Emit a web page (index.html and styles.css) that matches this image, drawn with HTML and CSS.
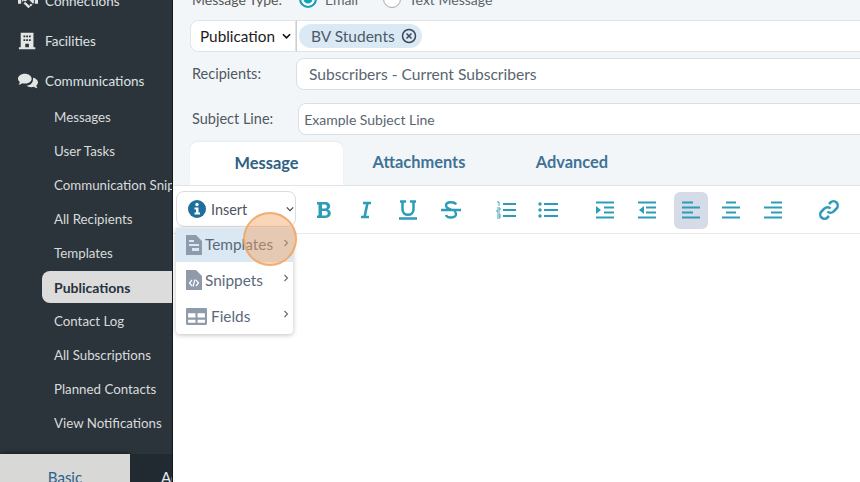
FILE: index.html
```html
<!DOCTYPE html>
<html lang="en">
<head>
<meta charset="utf-8">
<title>Publications</title>
<link rel="stylesheet" href="styles.css">
</head>
<body>
<div class="app">
  <aside class="sidebar">
    <nav class="nav">
      <div class="nav-main nav-first">
        <svg class="nav-icon" viewBox="0 0 22 16"><path fill="#e4e6e6" d="M0 1h3.500v10H0zM18.500 1H22v10h-3.500zM4.500 2H9l2 1 2-1h4.500v8l-1 1-5-5-3.500 2.500L6 7.500 4.500 9.500zM6 10.500l2-1.500 5.500 5-2 2zM14 11l2 1-2 2-1.500-1.500z"/></svg>
        <span>Connections</span>
      </div>
      <div class="nav-main">
        <svg class="nav-icon" viewBox="0 0 22 18"><path fill="#e4e6e6" fill-rule="evenodd" d="M3 0h14v16h2v2H1v-2h2zM6 3v2h2V3zm3 0v2h2V3zm3 0v2h2V3zM6 7v2h2V7zm3 0v2h2V7zm3 0v2h2V7zM8 12v4h4v-4z"/></svg>
        <span>Facilities</span>
      </div>
      <div class="nav-main nav-last">
        <svg class="nav-icon" viewBox="0 0 22 16"><path fill="#e4e6e6" d="M7.500 0C11.600 0 15 2.400 15 5.400s-3.400 5.400-7.500 5.400c-1 0-2-.1-2.800-.4C3.700 11.200 2.200 12 .5 12c.8-.8 1.400-1.900 1.500-3C.8 8 0 6.800 0 5.400 0 2.400 3.400 0 7.500 0z"/><path fill="#e4e6e6" d="M16.500 4.500c3 .6 5.500 2.500 5.500 5 0 1.300-.7 2.500-1.900 3.400.1 1 .7 2.200 1.400 3.100-1.700 0-3.100-.8-4.100-1.600-.9.300-1.900.4-2.900.4-2 0-3.900-.6-5.200-1.600 4.500-.2 7.700-3 7.200-8.700z"/></svg>
        <span>Communications</span>
      </div>
      <a class="nav-sub">Messages</a>
      <a class="nav-sub">User Tasks</a>
      <a class="nav-sub">Communication Snippets</a>
      <a class="nav-sub">All Recipients</a>
      <a class="nav-sub">Templates</a>
      <a class="nav-sub nav-active">Publications</a>
      <a class="nav-sub">Contact Log</a>
      <a class="nav-sub">All Subscriptions</a>
      <a class="nav-sub">Planned Contacts</a>
      <a class="nav-sub">View Notifications</a>
    </nav>
    <div class="side-tabs">
      <div class="side-tab side-tab-on">Basic</div>
      <div class="side-tab">Advanced</div>
    </div>
  </aside>

  <main class="main">
    <div class="form">
      <div class="type-row">
        <span class="type-label">Message Type:</span>
        <span class="radio radio-on"></span><span class="radio-text">Email</span>
        <span class="radio radio-off"></span><span class="radio-text">Text Message</span>
      </div>
      <div class="pub-row">
        <div class="pub-select">
          <span>Publication</span>
          <svg class="chev" viewBox="0 0 10 6"><path d="M1 1l4 4 4-4" fill="none" stroke="#111" stroke-width="1.800"/></svg>
        </div>
        <div class="pub-input">
          <span class="chip">BV Students
            <svg class="chip-x" viewBox="0 0 16 16"><circle cx="8" cy="8" r="6.500" fill="none" stroke="#37465a" stroke-width="1.500"/><path d="M5.500 5.500l5 5M10.500 5.500l-5 5" stroke="#37465a" stroke-width="1.500"/></svg>
          </span>
        </div>
      </div>
      <div class="field-row recipients-row">
        <label class="field-label">Recipients:</label>
        <div class="box box-recipients">Subscribers - Current Subscribers</div>
      </div>
      <div class="field-row subject-row">
        <label class="field-label">Subject Line:</label>
        <div class="box box-subject">Example Subject Line</div>
      </div>
      <div class="tabs">
        <div class="tab tab-on">Message</div>
        <div class="tab tab-attach">Attachments</div>
        <div class="tab tab-adv">Advanced</div>
      </div>
    </div>
    <div class="editor">
      <div class="toolbar">
        <div class="insert-spacer"></div>
        <svg class="tool t-b" viewBox="0 0 16 18"><path fill="#2c9cb8" fill-rule="evenodd" d="M1 1h8c6 0 6.500 6 3 7.500 4.500 1.500 3.500 8.500-2.500 8.500H1v-2.500h1.500v-11H1zM6 3.500V7.500h3c2.500 0 2.500-4 0-4zM6 10v4.500h3.500c3 0 3-4.500 0-4.500z"/></svg>
        <svg class="tool t-i" viewBox="0 0 16 18"><path d="M5 2h8M3 16h8M9.500 2L6.500 16" fill="none" stroke="#2c9cb8" stroke-width="2.600"/></svg>
        <svg class="tool t-u" viewBox="0 0 20 20"><path d="M2 1.500h6M12 1.500h6M4.500 1.500v8c0 7 11 7 11 0v-8M1 18.500h18" fill="none" stroke="#2c9cb8" stroke-width="2.500"/></svg>
        <svg class="tool t-s" viewBox="0 0 20 20"><path d="M15 4.500C14 1.500 5 1 5 5.500c0 2 2 3 5 4M5 15c1 3.500 10 3.500 10-1 0-1-.5-2-1.500-3M0 10h20" fill="none" stroke="#2c9cb8" stroke-width="2.400"/></svg>
        <svg class="tool t-ol" viewBox="0 0 20 18"><path d="M7 3h13M7 9h13M7 15h13" stroke="#2c9cb8" stroke-width="2.200"/><path d="M1 1h2v4M1 7h3v2H1v2h3M1 13h3v4H1M1 15h3" fill="none" stroke="#2c9cb8" stroke-width=".9"/></svg>
        <svg class="tool t-ul" viewBox="0 0 20 18"><path d="M6 3h14M6 9h14M6 15h14" stroke="#2c9cb8" stroke-width="2.200"/><circle cx="2" cy="3" r="1.700" fill="#2c9cb8"/><circle cx="2" cy="9" r="1.700" fill="#2c9cb8"/><circle cx="2" cy="15" r="1.700" fill="#2c9cb8"/></svg>
        <svg class="tool t-in" viewBox="0 0 18 18"><path d="M0 1.500h18M8 6.500h10M8 11.500h10M0 16.500h18" stroke="#2c9cb8" stroke-width="2"/><path d="M0 5l5 4-5 4z" fill="#2c9cb8"/></svg>
        <svg class="tool t-out" viewBox="0 0 18 18"><path d="M0 1.500h18M8 6.500h10M8 11.500h10M0 16.500h18" stroke="#2c9cb8" stroke-width="2"/><path d="M6 5L1 9l5 4z" fill="#2c9cb8"/></svg>
        <div class="tool-on">
          <svg class="tool-svg" viewBox="0 0 18 18"><path d="M0 1.500h11M0 6.500h18M0 11.500h11M0 16.500h18" stroke="#2c9cb8" stroke-width="2"/></svg>
        </div>
        <svg class="tool t-ac" viewBox="0 0 18 18"><path d="M4 1.500h10M0 6.500h18M4 11.500h10M0 16.500h18" stroke="#2c9cb8" stroke-width="2"/></svg>
        <svg class="tool t-ar" viewBox="0 0 18 18"><path d="M7 1.500h11M0 6.500h18M7 11.500h11M0 16.500h18" stroke="#2c9cb8" stroke-width="2"/></svg>
        <svg class="tool t-link" viewBox="0 0 20 20"><path d="M8.500 11.500a4 4 0 0 0 6 0l3-3a4 4 0 0 0-6-6l-1.500 1.500M11.500 8.500a4 4 0 0 0-6 0l-3 3a4 4 0 0 0 6 6L10 16" fill="none" stroke="#2c9cb8" stroke-width="2.500"/></svg>
      </div>
    </div>
  </main>

  <div class="insert">
    <svg class="info" viewBox="0 0 18 18"><circle cx="9" cy="9" r="9" fill="#1f6f9c"/><circle cx="9" cy="4.500" r="1.700" fill="#fff"/><path d="M6.500 7.500H10.500V12.500H12V14.500H6.500V12.500H8V9.500H6.500z" fill="#fff"/></svg>
    <span>Insert</span>
    <svg class="chev chev-insert" viewBox="0 0 10 6"><path d="M1 1l4 4 4-4" fill="none" stroke="#444" stroke-width="1.500"/></svg>
  </div>

  <div class="menu">
    <div class="menu-item menu-item-on">
      <svg class="menu-icon" viewBox="0 0 16 20"><path fill="#8f9bab" fill-rule="evenodd" d="M0 0h10l6 6v14H0zM3 5v2h5V5zM3 9v2h10V9zM6 13v3h7v-3z"/></svg>
      <span>Templates</span>
      <svg class="caret" viewBox="0 0 6 8"><path d="M1.500 1l3 3-3 3" fill="none" stroke="#5f6a75" stroke-width="1.100"/></svg>
    </div>
    <div class="menu-item">
      <svg class="menu-icon" viewBox="0 0 16 20"><path fill="#8f9bab" d="M0 0h10l6 6v14H0z"/><path d="M6 10l-2.500 3 2.500 3M10 10l2.500 3-2.500 3M9 9.500l-2 7" fill="none" stroke="#fff" stroke-width="1.200"/></svg>
      <span>Snippets</span>
      <svg class="caret" viewBox="0 0 6 8"><path d="M1.500 1l3 3-3 3" fill="none" stroke="#5f6a75" stroke-width="1.100"/></svg>
    </div>
    <div class="menu-item">
      <svg class="menu-icon menu-icon-wide" viewBox="0 0 20 16"><path fill="#8f9bab" fill-rule="evenodd" d="M1 0h18a1 1 0 0 1 1 1v14a1 1 0 0 1-1 1H1a1 1 0 0 1-1-1V1a1 1 0 0 1 1-1zM2 5v4h7V5zm9 0v4h7V5zM2 11v3h7v-3zm9 0v3h7v-3z"/></svg>
      <span>Fields</span>
      <svg class="caret" viewBox="0 0 6 8"><path d="M1.500 1l3 3-3 3" fill="none" stroke="#5f6a75" stroke-width="1.100"/></svg>
    </div>
  </div>

  <div class="spot"></div>
</div>
</body>
</html>
```

FILE: styles.css
```css
* { box-sizing: border-box; }
html, body { margin: 0; padding: 0; height: 482px; overflow: hidden; }
body { font-family: Lato, "Open Sans", sans-serif; background: #fff; }

.app { position: relative; display: flex; width: 860px; height: 482px; overflow: hidden; }

/* Sidebar */
.sidebar {
  position: relative;
  flex: 0 0 173px;
  height: 482px;
  background: #2c343b;
  border-right: 1px solid #14181c;
  overflow: hidden;
  display: flex;
  flex-direction: column;
  justify-content: space-between;
}
.nav { display: flex; flex-direction: column; margin-top: -19px; }
.nav-main {
  display: flex;
  align-items: center;
  height: 40px;
  padding-left: 18px;
  font-size: 13.5px;
  color: #dfe2e3;
  white-space: nowrap;
}
.nav-last { height: 39px; padding-top: 1px; }
.nav-icon { width: 20px; height: 18px; margin-right: 7px; flex: none; }
.nav-sub {
  display: flex;
  align-items: center;
  height: 34px;
  padding-left: 54px;
  font-size: 13.3px;
  color: #d8dbdc;
  white-space: nowrap;
}
.nav-active {
  position: relative;
  margin-left: 42px;
  height: 32px;
  margin-top: 1px;
  margin-bottom: 1px;
  padding-left: 12px;
  background: #dcdcdc;
  border-radius: 8px 0 0 8px;
  color: #27323c;
  font-size: 14px;
  font-weight: 700;
}
.side-tabs { display: flex; height: 28px; flex: none; }
.side-tab {
  flex: 0 0 130px;
  text-align: center;
  font-size: 15px;
  line-height: 46px;
  color: #e8eaeb;
  white-space: nowrap;
  background: #222a31;
}
.side-tab:last-child { padding-left: 31px; text-align: left; }
.side-tab-on { background: #d8d8d6; color: #29628c; box-shadow: 0 0 5px rgba(0,0,0,.7); }

/* Main */
.main { flex: 1; min-width: 0; display: flex; flex-direction: column; background: #fff; }
.form { background: #f3f6f9; padding: 0 0 0 17px; height: 185px; flex: none; }

.type-row { display: flex; align-items: center; height: 20px; margin-top: -11px; font-size: 14px; color: #555; padding-left: 2px; }
.type-label { width: 107px; }
.radio { width: 18px; height: 18px; border-radius: 50%; background: #fff; margin-right: 8px; flex: none; }
.radio-on { border: 2px solid #17a2b8; box-shadow: inset 0 0 0 2.5px #fff; background: #17a2b8; }
.radio-off { border: 1.5px solid #a3a9af; }
.radio-text { margin-right: 25px; color: #5d646b; }

.pub-row { display: flex; height: 32px; margin-top: 11px; margin-right: -20px; }
.pub-select {
  flex: 0 0 106px;
  display: flex;
  align-items: center;
  justify-content: space-between;
  padding: 0 4px 0 9px;
  background: #fff;
  border: 1px solid #dfe4e8;
  border-radius: 8px 0 0 8px;
  font-size: 15.3px;
  color: #1c1c1c;
}
.chev { width: 9px; height: 6px; flex: none; }
.pub-input {
  flex: 1;
  display: flex;
  align-items: center;
  padding-left: 2px;
  background: #fff;
  border: 1px solid #dfe4e8;
  border-left: 1px solid #c9ced3;
}
.chip {
  display: flex;
  align-items: center;
  height: 24px;
  padding: 0 5px 0 12px;
  border-radius: 12px;
  background: #dbe9f4;
  font-size: 15.5px;
  color: #4b5a6b;
  white-space: nowrap;
}
.chip-x { width: 16px; height: 16px; margin-left: 6px; }

.field-row { display: flex; align-items: center; margin-right: -20px; }
.recipients-row { margin-top: 6px; height: 32px; }
.subject-row { margin-top: 13px; height: 32px; }
.field-label { font-size: 14.5px; color: #4f5861; padding-left: 2px; white-space: nowrap; line-height: 30px; }
.box {
  height: 32px;
  display: flex;
  align-items: center;
  flex: 1;
  background: #fff;
  border: 1px solid #d9dfe3;
  border-radius: 8px 0 0 8px;
  color: #5a6570;
  white-space: nowrap;
}
.box-recipients { margin-left: 35px; padding-left: 12px; font-size: 15.6px; }
.box-subject { margin-left: 25px; padding-left: 5px; font-size: 14px; }

.tabs { display: flex; height: 43px; margin-top: 7px; }
.tab {
  display: flex;
  align-items: center;
  justify-content: center;
  font-size: 16.4px;
  font-weight: 700;
  color: #3f7396;
}
.tab-on {
  flex: 0 0 153px;
  padding-bottom: 2px;
  background: #fff;
  border-radius: 8px 8px 0 0;
  box-shadow: 0 -1px 2px rgba(0,0,0,.06);
  color: #2f6184;
}
.tab-attach { flex: 0 0 152px; padding-bottom: 4px; }
.tab-adv { flex: 0 0 154px; padding-bottom: 4px; }

.editor { flex: 1; background: #fff; }
.toolbar {
  position: relative;
  display: flex;
  align-items: center;
  height: 49px;
  border-top: 1px solid #e2e5e8;
  border-bottom: 1px solid #e8eaec;
}
.insert-spacer { flex: 0 0 143px; }
.tool { flex: none; height: 18px; width: 18px; }
.t-b { width: 16px; height: 18px; }
.t-i { width: 16px; height: 18px; margin-left: 26px; }
.t-u { width: 20px; height: 20px; margin-left: 24px; }
.t-s { width: 20px; height: 20px; margin-left: 23px; }
.t-ol { width: 20px; margin-left: 35px; }
.t-ul { width: 20px; margin-left: 22px; }
.t-in { margin-left: 38px; }
.t-out { margin-left: 24px; }
.tool-on {
  flex: none;
  display: flex;
  align-items: center;
  justify-content: center;
  width: 34px;
  height: 37px;
  margin-left: 18px;
  margin-top: 2px;
  border-radius: 6px;
  background: #d6dbe8;
}
.tool-svg { width: 18px; height: 18px; margin-top: -2px; }
.t-ac { margin-left: 14px; }
.t-ar { margin-left: 24px; }
.t-link { width: 20px; height: 20px; margin-left: 37px; }

/* Overlays */
.insert {
  position: absolute;
  left: 176px;
  top: 191px;
  width: 120px;
  height: 36px;
  display: flex;
  align-items: center;
  padding: 0 0 0 11px;
  background: #fff;
  border: 1px solid #d9dde1;
  border-radius: 8px;
  font-size: 14.4px;
  color: #4a5560;
}
.info { width: 18px; height: 18px; margin-right: 5px; flex: none; }
.chev-insert { margin-left: auto; margin-right: 1px; width: 8px; }

.menu {
  position: absolute;
  left: 176px;
  top: 228px;
  width: 117px;
  background: #fff;
  box-shadow: 0 1px 5px rgba(0,0,0,.25);
  border-radius: 0 0 4px 4px;
}
.menu-item {
  position: relative;
  display: flex;
  align-items: center;
  height: 36px;
  padding-left: 10px;
  font-size: 15.4px;
  color: #5b6a7b;
}
.menu-item-on { height: 34px; background: #d9e8f3; }
.menu-item-on > span { position: relative; top: -1px; }
.menu-icon { width: 16px; height: 20px; margin-right: 3px; flex: none; }
.menu-icon-wide { width: 21px; height: 17px; margin-right: 4px; }
.caret {
  position: absolute;
  right: 4px;
  top: 50%;
  width: 6px;
  height: 8px;
  margin-top: -6px;
}
.spot {
  position: absolute;
  left: 243px;
  top: 212px;
  width: 54px;
  height: 54px;
  border-radius: 50%;
  background: rgba(244, 165, 100, .45);
  border: 2px solid rgba(240, 165, 100, .85);
}
```
